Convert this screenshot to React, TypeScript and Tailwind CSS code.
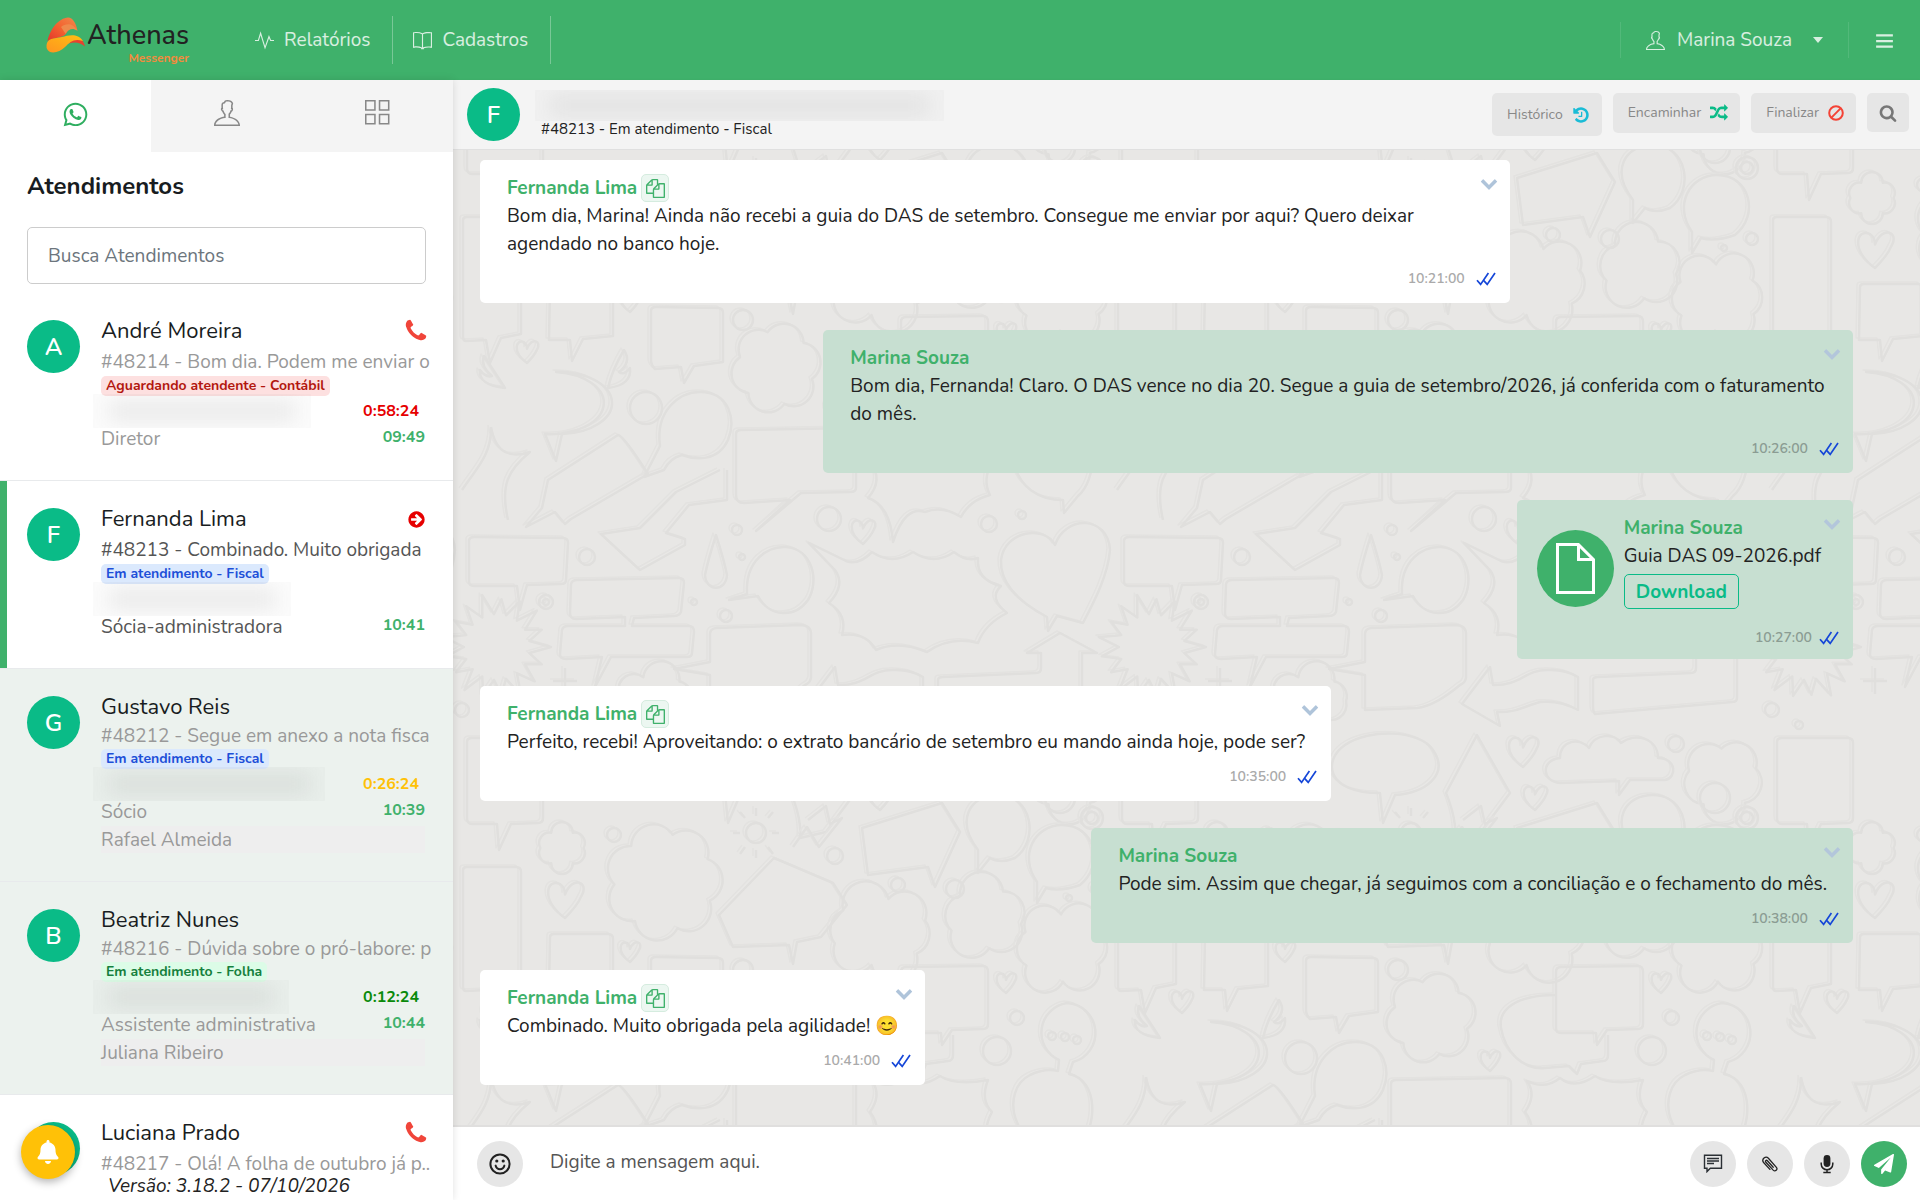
import React, { useState } from 'react';
import clsx from 'clsx';
import { FaBell, FaWhatsapp } from 'react-icons/fa';
import { TfiBook, TfiFile, TfiLayoutGrid2, TfiMenu, TfiPulse, TfiUser } from 'react-icons/tfi';

type Ticket = {
    id: number;
    name: string;
    preview: string;
    status?: string;
    badgeClass?: string;
    role?: string;
    time?: string;
    blurClass?: string;
    timer?: string;
    timerClass?: string;
    agent?: string;
    icon?: 'phone' | 'arrow';
};

type Message = {
    id: number;
    author: string;
    mine: boolean;
    time: string;
    text?: string;
    file?: string;
};

const tickets: Ticket[] = [
    {
        id: 48214,
        name: 'André Moreira',
        preview: 'Bom dia. Podem me enviar o',
        status: 'Aguardando atendente - Contábil',
        badgeClass: 'bg-[#fde0e0] text-[#b3170f]',
        role: 'Diretor',
        time: '09:49',
        blurClass: 'w-[218px]',
        timer: '0:58:24',
        timerClass: 'text-[#e60000]',
        icon: 'phone',
    },
    {
        id: 48213,
        name: 'Fernanda Lima',
        preview: 'Combinado. Muito obrigada',
        status: 'Em atendimento - Fiscal',
        badgeClass: 'bg-[#dbe9fd] text-[#1d4fd8]',
        role: 'Sócia-administradora',
        time: '10:41',
        blurClass: 'w-[198px]',
        icon: 'arrow',
    },
    {
        id: 48212,
        name: 'Gustavo Reis',
        preview: 'Segue em anexo a nota fisca',
        status: 'Em atendimento - Fiscal',
        badgeClass: 'bg-[#dbe9fd] text-[#1d4fd8]',
        role: 'Sócio',
        time: '10:39',
        blurClass: 'w-[232px]',
        timer: '0:26:24',
        timerClass: 'text-[#ffc107]',
        agent: 'Rafael Almeida',
    },
    {
        id: 48216,
        name: 'Beatriz Nunes',
        preview: 'Dúvida sobre o pró-labore: p',
        status: 'Em atendimento - Folha',
        badgeClass: 'bg-[#dcfce7] text-[#15803d]',
        role: 'Assistente administrativa',
        time: '10:44',
        blurClass: 'w-[196px]',
        timer: '0:12:24',
        timerClass: 'text-[#0a8a0a]',
        agent: 'Juliana Ribeiro',
    },
    {
        id: 48217,
        name: 'Luciana Prado',
        preview: 'Olá! A folha de outubro já p..',
        icon: 'phone',
    },
];

const messages: Message[] = [
    {
        id: 1,
        author: 'Fernanda Lima',
        mine: false,
        time: '10:21:00',
        text: 'Bom dia, Marina! Ainda não recebi a guia do DAS de setembro. Consegue me enviar por aqui? Quero deixar agendado no banco hoje.',
    },
    {
        id: 2,
        author: 'Marina Souza',
        mine: true,
        time: '10:26:00',
        text: 'Bom dia, Fernanda! Claro. O DAS vence no dia 20. Segue a guia de setembro/2026, já conferida com o faturamento do mês.',
    },
    { id: 3, author: 'Marina Souza', mine: true, time: '10:27:00', file: 'Guia DAS 09-2026.pdf' },
    {
        id: 4,
        author: 'Fernanda Lima',
        mine: false,
        time: '10:35:00',
        text: 'Perfeito, recebi! Aproveitando: o extrato bancário de setembro eu mando ainda hoje, pode ser?',
    },
    {
        id: 5,
        author: 'Marina Souza',
        mine: true,
        time: '10:38:00',
        text: 'Pode sim. Assim que chegar, já seguimos com a conciliação e o fechamento do mês.',
    },
    {
        id: 6,
        author: 'Fernanda Lima',
        mine: false,
        time: '10:41:00',
        text: 'Combinado. Muito obrigada pela agilidade! 😊',
    },
];

/* ---------- Icons ---------- */

const glyphs = {
    history:
        'M1664 896q0 156-61 298t-164 245-245 164-298 61q-172 0-327-72.5t-264-204.5q-7-10-6.5-22.5t8.5-20.5l137-138q10-9 25-9 16 2 23 12 73 95 179 147t225 52q104 0 198.5-40.5t163.5-109.5 109.5-163.5 40.5-198.5-40.5-198.5-109.5-163.5-163.5-109.5-198.5-40.5q-98 0-188 35.5t-160 101.5l137 138q31 30 14 69-17 40-59 40h-448q-26 0-45-19t-19-45v-448q0-42 40-59 39-17 69 14l130 129q107-101 244.5-156.5t284.5-55.5q156 0 298 61t245 164 164 245 61 298zm-640-288v448q0 14-9 23t-23 9h-320q-14 0-23-9t-9-23v-64q0-14 9-23t23-9h224v-352q0-14 9-23t23-9h64q14 0 23 9t9 23z',
    random:
        'M666 481q-60 92-137 273-22-45-37-72.5t-40.5-63.5-51-56.5-63-35-81.5-14.5h-224q-14 0-23-9t-9-23v-192q0-14 9-23t23-9h224q250 0 410 225zm1126 799q0 14-9 23l-320 320q-9 9-23 9-13 0-22.5-9.5t-9.5-22.5v-192q-32 0-85 .5t-81 1-73-1-71-5-64-10.5-63-18.5-58-28.5-59-40-55-53.5-56-69.5q59-93 136-273 22 45 37 72.5t40.5 63.5 51 56.5 63 35 81.5 14.5h256v-192q0-14 9-23t23-9q12 0 24 10l319 319q9 9 9 23zm0-896q0 14-9 23l-320 320q-9 9-23 9-13 0-22.5-9.5t-9.5-22.5v-192h-256q-48 0-87 15t-69 45-51 61.5-45 77.5q-32 62-78 171-29 66-49.5 111t-54 105-64 100-74 83-90 68.5-106.5 42-128 16.5h-224q-14 0-23-9t-9-23v-192q0-14 9-23t23-9h224q48 0 87-15t69-45 51-61.5 45-77.5q32-62 78-171 29-66 49.5-111t54-105 64-100 74-83 90-68.5 106.5-42 128-16.5h256v-192q0-14 9-23t23-9q12 0 24 10l319 319q9 9 9 23z',
    files:
        'M1696 384q40 0 68 28t28 68v1216q0 40-28 68t-68 28h-960q-40 0-68-28t-28-68v-288h-544q-40 0-68-28t-28-68v-672q0-40 20-88t48-76l408-408q28-28 76-48t88-20h416q40 0 68 28t28 68v328q68-40 128-40h416zm-544 213l-299 299h299v-299zm-640-384l-299 299h299v-299zm196 647l316-316v-416h-384v416q0 40-28 68t-68 28h-416v640h512v-256q0-40 20-88t48-76zm956 804v-1152h-384v416q0 40-28 68t-68 28h-416v640h896z',
    plane:
        'M1764 11q33 24 27 64l-256 1536q-5 29-32 45-14 8-31 8-11 0-24-5l-453-185-242 295q-18 23-49 23-13 0-22-4-19-7-30.5-23.5t-11.5-36.5v-349l864-1059-1069 925-395-162q-37-14-40-55-2-40 32-59l1664-960q15-9 32-9 20 0 36 11z',
    phone:
        'M1600 1240q0 27-10 70.5t-21 68.5q-21 50-122 106-94 51-186 51-27 0-53-3.5t-57.5-12.5-47-14.5-55.5-20.5-49-18q-98-35-175-83-127-79-264-216t-216-264q-48-77-83-175-3-9-18-49t-20.5-55.5-14.5-47-12.5-57.5-3.5-53q0-92 51-186 56-101 106-122 25-11 68.5-21t70.5-10q14 0 21 3 18 6 53 76 11 19 30 54t35 63.5 31 53.5q3 4 17.5 25t21.5 35.5 7 28.5q0 20-28.5 50t-62 55-62 53-28.5 46q0 9 5 22.5t8.5 20.5 14 24 11.5 19q76 137 174 235t235 174q2 1 19 11.5t24 14 20.5 8.5 22.5 5q18 0 46-28.5t53-62 55-62 50-28.5q14 0 28.5 7t35.5 21.5 25 17.5q25 15 53.5 31t63.5 35 54 30q70 35 76 53 3 7 3 21z',
    chevron:
        'M1683 808l-742 741q-19 19-45 19t-45-19l-742-741q-19-19-19-45.5t19-45.5l166-165q19-19 45-19t45 19l531 531 531-531q19-19 45-19t45 19l166 165q19 19 19 45.5t-19 45.5z',
    arrow:
        'M1413 896q0-27-18-45l-91-91-362-362q-18-18-45-18t-45 18l-91 91q-18 18-18 45t18 45l189 189h-502q-26 0-45 19t-19 45v128q0 26 19 45t45 19h502l-189 189q-19 19-19 45t19 45l91 91q18 18 45 18t45-18l362-362 91-91q18-18 18-45zm251 0q0 209-103 385.5t-279.5 279.5-385.5 103-385.5-103-279.5-279.5-103-385.5 103-385.5 279.5-279.5 385.5-103 385.5 103 279.5 279.5 103 385.5z',
    search:
        'M1216 832q0-185-131.5-316.5t-316.5-131.5-316.5 131.5-131.5 316.5 131.5 316.5 316.5 131.5 316.5-131.5 131.5-316.5zm512 832q0 52-38 90t-90 38q-54 0-90-38l-343-342q-179 124-399 124-143 0-273.5-55.5t-225-150-150-225-55.5-273.5 55.5-273.5 150-225 225-150 273.5-55.5 273.5 55.5 225 150 150 225 55.5 273.5q0 220-124 399l343 343q37 37 37 90z',
};

const Glyph: React.FC<{ name: keyof typeof glyphs; className?: string }> = ({ name, className }) => (
    <svg viewBox="0 0 1792 1792" fill="currentColor" className={className} aria-hidden="true">
        <path d={glyphs[name]} />
    </svg>
);

const BanIcon = () => (
    <svg viewBox="0 0 16 16" fill="none" stroke="currentColor" strokeWidth="2" className="size-4 text-[#f44336]" aria-hidden="true">
        <circle cx="8" cy="8" r="6.8" />
        <path d="M3.4 12.6 12.6 3.4" />
    </svg>
);

const TicksIcon = () => (
    <svg viewBox="0 0 20 14" fill="none" stroke="#1546d8" strokeWidth="1.7" className="h-[14px] w-5" aria-hidden="true">
        <path d="M1 8.2 4.6 12.4 12.4 1" />
        <path d="M7.8 8.6 11.2 12.4 19 1" />
    </svg>
);

const SmileIcon = () => (
    <svg viewBox="0 0 22 22" fill="none" stroke="#222" strokeWidth="2" className="size-[22px]" aria-hidden="true">
        <circle cx="11" cy="11" r="9.6" />
        <path d="M6.6 12.6c.6 2.3 2.3 3.7 4.4 3.7s3.8-1.4 4.4-3.7" strokeLinecap="round" />
        <circle cx="7.8" cy="8" r="1.6" fill="#222" stroke="none" />
        <circle cx="14.2" cy="8" r="1.6" fill="#222" stroke="none" />
    </svg>
);

const QuickReplyIcon = () => (
    <svg viewBox="0 0 20 19" fill="none" stroke="#2b3035" strokeWidth="1.4" className="h-[19px] w-5" aria-hidden="true">
        <path d="M1.5 1.2h17v13H7.3L4 17.6v-3.4H1.5z" />
        <path d="M4 4.5h12M4 7h12M4 9.5h7" />
    </svg>
);

const ClipIcon = () => (
    <svg viewBox="0 0 18 18" fill="none" stroke="#222" strokeWidth="1.3" strokeLinecap="round" className="size-[18px]" aria-hidden="true">
        <path d="M12.2 12.2 6.4 5.8C5.2 4.6 3.8 6 4.9 7.200l7.300 7.900c2 1.900 4.900-.6 3.200-2.800L7.400 3.200C4.600.4.100 4.300 2.600 7.500l6.300 6.900" />
    </svg>
);

const MicIcon = () => (
    <svg viewBox="0 0 14 20" className="h-5 w-[14px]" aria-hidden="true">
        <rect x="3.6" y="1" width="6.8" height="12" rx="3.4" fill="#222" />
        <path d="M1.2 8.5v1.5a5.8 5.8 0 0 0 11.6 0V8.5M7 15.8v2.4M3.3 18.4h7.4" fill="none" stroke="#222" strokeWidth="1.5" />
    </svg>
);

const Logo = () => (
    <svg viewBox="0 0 40 36" className="mt-[3px] h-9 w-10 shrink-0" aria-hidden="true">
        <defs>
            <linearGradient id="flame" x1="0" y1="1" x2="1" y2="0">
                <stop offset="0" stopColor="#e2372c" />
                <stop offset="0.5" stopColor="#f4622f" />
                <stop offset="1" stopColor="#ee8a4c" />
            </linearGradient>
            <linearGradient id="wave" x1="0" y1="1" x2="1" y2="0">
                <stop offset="0" stopColor="#ff9420" />
                <stop offset="1" stopColor="#ffc011" />
            </linearGradient>
        </defs>
        <path d="M1.5 24C4 12 13 1 22 .6c5 0 8 6 9.500 13.200-3-3-9-3.300-11 2.200C17 22 7 20 1.500 24z" fill="url(#flame)" />
        <path d="M15 10c5-4 12-4 16.500 3.800-4-3-9-2.600-12 3z" fill="#ee8a4c" />
        <path d="M24 21c7-4 13 0 15 8.500-5-4-10-5-16-3z" fill="#e8412f" />
        <path d="M.6 31C0 20 8 22 16 20c7-2 16-4 21 4-9-3-13 1-18 6-6 6-16 8-18.400 1z" fill="url(#wave)" />
    </svg>
);

/* ---------- Chat wallpaper ---------- */

// closed outline made of n round lobes
const cloudPath = (cx: number, cy: number, rx: number, ry: number, n: number, turn = 0) => {
    const pts = Array.from({ length: n }, (_, i) => {
        const a = turn + (i * 2 * Math.PI) / n;
        return [cx + rx * 0.8 * Math.cos(a), cy + ry * 0.8 * Math.sin(a)];
    });
    const r = ((rx + ry) / 2) * 0.85 * Math.sin(Math.PI / n);
    return pts.map((p, i) => (i ? `A${r} ${r} 0 0 1 ${p[0]} ${p[1]}` : `M${p[0]} ${p[1]}`)).join('') + `A${r} ${r} 0 0 1 ${pts[0][0]} ${pts[0][1]}Z`;
};

const burstPath = (cx: number, cy: number, inner: number, outer: number, n: number) =>
    Array.from({ length: n * 2 }, (_, i) => {
        const a = (i * Math.PI) / n;
        const r = i % 2 ? inner : outer - (i % 3) * 3;
        return `${i ? 'L' : 'M'}${cx + r * Math.cos(a)} ${cy + r * Math.sin(a)}`;
    }).join('') + 'Z';

const heartPath = (cx: number, cy: number, s: number) =>
    `M${cx} ${cy + s / 2}C${cx - s * 0.7} ${cy} ${cx - s * 0.5} ${cy - s * 0.6} ${cx - s * 0.15} ${cy - s * 0.45}Q${cx} ${cy - s * 0.35} ${cx} ${cy - s * 0.15}C${cx + s * 0.2} ${cy - s * 0.7} ${cx + s * 0.7} ${cy - s * 0.5} ${cx + s * 0.45} ${cy - s * 0.1}Q${cx + s * 0.35} ${cy + s * 0.15} ${cx} ${cy + s / 2}Z`;

const doodles = [
    // boxes with a tail
    'M463 220Q463 217 467 217H516Q521 217 521 222V334L501 338 490 363 486 340 466 341Q463 341 463 337Z',
    'M550 287Q550 284 554 284H608Q613 284 613 289V336L583 339 572 361 570 340 549 340Z',
    'M651 311Q651 307 656 307L718 308Q723 308 723 313V362L694 366 684 383 681 367 655 369Q651 365 651 360Z',
    'M736 434Q736 430 741 430L850 428Q856 428 856 434V488Q856 492 850 492L801 493 756 531 790 500 744 503Q736 503 736 495Z',
    'M901 322Q901 317 906 317L983 316Q988 316 988 322V374Q988 379 983 379L952 380 942 395 941 383 906 383Q901 383 901 378Z',
    'M901 345C860 345 843 360 846 378 850 402 868 420 890 418L914 416 922 424 926 414 948 411Q953 411 953 405V385',
    'M467 742Q467 738 472 738H538Q543 738 543 743V818Q543 823 538 823L511 824 499 850 497 824 472 824Q467 824 467 818Z',
    'M469 540Q470 537 474 537L563 538Q568 538 568 543L566 580Q566 584 561 584L527 585 520 610 517 586 474 586Q469 586 469 581Z',
    'M571 584Q572 580 577 580L679 578Q684 578 684 583L681 612Q679 616 674 616L634 618 632 626 689 626Q694 626 694 632L692 653Q692 657 687 657L611 657 595 687 602 657 566 659Q560 659 560 654L562 630Q563 626 568 626L625 626V617L576 619Q570 619 570 613Z',
    'M710 662V634Q710 629 716 628L800 625Q811 625 811 634V678Q810 683 805 685 780 706 762 708L710 710V675L674 669Z',
    'M938 680Q938 677 943 677L1036 673Q1041 673 1041 668V653H1027L1060 633 1097 653H1082V698Q1082 702 1077 702L940 714Q938 712 938 706Z',
    // balloons
    'M556 372A53 31 0 1 1 545 434L556 461 562 434A53 31 0 0 0 556 372Z',
    'M505 388Q478 385 480 370 486 378 492 376 480 366 484 356 500 380 505 388ZM608 388Q632 385 630 368 624 376 619 372 632 362 624 350 612 370 608 388Z',
    'M660 446C655 410 680 392 700 392 730 392 736 420 728 440 718 462 695 460 682 455Q670 458 664 470L644 477Q652 462 660 446Z',
    'M747 594C745 560 768 546 786 547 812 549 820 580 808 600 795 618 770 618 758 596L729 600Z',
    'M978 200C955 170 970 145 998 145 1032 145 1040 190 1015 208Q1000 214 990 208L978 223Z',
    'M1037 232C1018 205 1035 175 1062 175 1095 175 1105 215 1080 235Q1060 242 1046 238L1037 253Z',
    'M725 793C670 793 668 760 690 745 715 728 765 730 778 750 795 775 770 793 740 795L728 823Z',
    'M1067 353A30 30 0 0 1 1073 412L1069 424C1100 430 1097 480 1078 496L1064 513 1063 500C1010 500 1000 440 1030 425Q1045 418 1058 421L1059 410A30 30 0 0 1 1067 353Z',
    // leaf, slanted note, zigzag arrow
    'M491 427C492 455 475 470 462 490M491 427C496 455 512 458 530 452 508 470 500 485 508 520',
    'M548 480 618 435Q624 436 648 474L571 519 565 524 555 512 526 527 542 508Z',
    'M727 470V500L689 505 666 533 685 539V545L640 570 601 534 640 528 676 492 720 470',
    'M793 197 807 177 819 197 842 168 830 174 826 156 808 170',
    // torn cloud, starry cloud, large heart
    'M809 543 846 561Q858 566 872 552 892 566 913 552 934 566 954 552 966 562 978 558 976 580 1001 586 988 598 1007 613 985 624 978 643 950 636 927 652 898 640 876 650 866 632 842 635 848 615 829 603 846 585 835 570Z',
    'M872 431Q890 440 905 428 920 440 940 426 955 436 988 430 980 450 992 462 982 480 990 495 970 500 961 517 942 505 925 512 905 505 893 542 890 505 868 498 884 480 870 462 882 445 872 431Z',
    'M1048 631 1047 617C1015 600 1000 580 1001 560 1005 530 1045 525 1055 545 1065 515 1108 515 1110 550 1108 575 1095 600 1083 623L1057 616Z',
    // banner arrow, diamond, pentagon notes
    'M807 704 835 667 838 685C865 686 870 670 892 670Q910 669 923 677V710Q905 700 885 702C870 706 860 713 842 712L845 726Z',
    'M822 735 855 793 826 832 800 838Q802 820 791 793Z',
    'M862 178 942 153 960 182 935 237 928 217 868 225Z',
    'M774 208 833 233 847 255 821 287 797 292 793 314 789 295 733 297 719 265Z',
    'M716 535Q708 560 705 575C706 592 726 592 727 575Q724 560 716 535Z',
    'M905 783C887 782 885 760 905 758 905 740 925 737 934 748 940 733 960 733 966 743 980 732 1003 738 1003 758 1022 758 1022 778 1010 780L975 780 964 795V781Z',
    'M565 668V694M553 681H577',
    'M745 168 740 162M768 168 773 162M756 166V158M740 183H733M772 183H779M745 197 740 204M768 197 773 204M756 200V208',
    cloudPath(776, 368, 47, 46, 6, 0.3),
    cloudPath(562, 198, 27, 22, 6),
    cloudPath(664, 232, 62, 60, 7, 0.4),
    cloudPath(880, 282, 60, 42, 6, 0.7),
    cloudPath(985, 268, 46, 38, 5, 0.2),
    cloudPath(1062, 298, 52, 42, 6, 0.5),
    cloudPath(1068, 779, 44, 38, 5, 0.9),
    cloudPath(655, 697, 46, 26, 6, 0.2),
    burstPath(497, 647, 33, 54, 17),
    heartPath(527, 352, 22),
    heartPath(565, 250, 36),
    heartPath(863, 532, 24),
    heartPath(835, 411, 20),
    heartPath(1006, 333, 20),
    heartPath(630, 302, 20),
    heartPath(868, 752, 30),
    heartPath(880, 798, 24),
];

const dots: [number, number, number][] = [
    [743, 320, 10], [646, 408, 16], [587, 557, 8], [546, 602, 7], [546, 602, 3], [737, 530, 5], [742, 557, 3],
    [694, 602, 3], [726, 616, 6], [829, 519, 12], [989, 524, 8], [1022, 515, 4], [997, 401, 14], [1017, 368, 7],
    [1060, 148, 15], [1092, 168, 11], [1092, 168, 6], [898, 235, 7], [955, 239, 9], [1097, 239, 6], [1069, 248, 3],
    [756, 183, 10], [835, 206, 8], [614, 185, 7], [462, 710, 7], [489, 725, 4], [1021, 744, 8],
    [1052, 386, 4], [1065, 387, 4], [1077, 390, 4],
];

const Wallpaper = () => (
    <svg className="absolute inset-0 size-full" aria-hidden="true">
        <defs>
            <g id="doodle-lines" fill="none" strokeLinejoin="round">
                {doodles.map((d, i) => (
                    <path key={i} d={d} />
                ))}
                {dots.map(([cx, cy, r], i) => (
                    <circle key={i} cx={cx} cy={cy} r={r} />
                ))}
            </g>
            <g id="doodle-tile">
                <use href="#doodle-lines" stroke="#e3e2e0" strokeWidth="1.5" transform="translate(-3 -2)" />
                <use href="#doodle-lines" stroke="#e0dfdd" strokeWidth="2.5" />
            </g>
            <pattern id="doodle" width="655" height="650" patternUnits="userSpaceOnUse" patternTransform="translate(7 0)">
                {[-1115, -460, 195].map((x) =>
                    [-800, -150, 500].map((y) => <use key={`${x}${y}`} href="#doodle-tile" x={x} y={y} />)
                )}
            </pattern>
        </defs>
        <rect width="100%" height="100%" fill="url(#doodle)" />
    </svg>
);

/* ---------- Shared pieces ---------- */

const Avatar: React.FC<{ letter: string }> = ({ letter }) => (
    <div className="flex size-[53px] shrink-0 items-center justify-center rounded-full bg-[#0abb87] text-2xl font-semibold text-white">
        {letter}
    </div>
);

const Redacted: React.FC<{ className?: string }> = ({ className }) => (
    <div className={clsx('overflow-hidden bg-[#808080]/[0.03] px-4 py-2', className)}>
        <div className="size-full bg-[#808080]/15 blur-[10px]" />
    </div>
);

/* ---------- Header ---------- */

const TopBar = () => (
    <header className="flex h-20 shrink-0 items-center justify-between bg-[#3fb16b] text-[19px] text-white/80">
        <div className="flex items-center">
            <a href="#inicio" aria-label="Athenas Messenger" className="mr-[66px] ml-[46px] flex items-start gap-px">
                <Logo />
                <span className="flex flex-col items-end pt-2">
                    <span className="text-[27px] leading-7 font-medium text-[#222]">Athenas</span>
                    <span className="text-xs leading-4 font-bold text-[#f58a3c]">Messenger</span>
                </span>
            </a>
            <nav className="flex items-center">
                <a href="#relatorios" className="flex h-12 items-center gap-[10px] border-r border-white/30 pr-[22px]">
                    <TfiPulse className="size-[19px]" />
                    Relatórios
                </a>
                <a href="#cadastros" className="flex h-12 items-center gap-[10px] border-r border-white/30 pr-[22px] pl-5">
                    <TfiBook className="size-[19px]" />
                    Cadastros
                </a>
            </nav>
        </div>
        <div className="flex items-center">
            <button type="button" className="flex h-9 items-center border-x border-white/10 px-[25px]">
                <TfiUser className="mr-3 size-[19px]" />
                Marina Souza
                <span className="ml-[21px] border-x-[5px] border-t-[6px] border-x-transparent border-t-white/80" />
            </button>
            <button type="button" aria-label="Menu" className="px-[26px]">
                <TfiMenu className="size-[19px]" />
            </button>
        </div>
    </header>
);

/* ---------- Sidebar ---------- */

const TicketItem: React.FC<{ ticket: Ticket; active: boolean; onSelect: () => void }> = ({ ticket, active, onSelect }) => (
    <li>
        <button
            type="button"
            onClick={onSelect}
            className={clsx(
                'relative flex w-full gap-[21px] border-b border-[#e8eaec] pt-6 pr-7 pl-[27px] text-left',
                ticket.agent ? 'bg-[#ecf2ee] pb-7' : 'bg-white pb-[27px]'
            )}
        >
            {active && <span className="absolute inset-y-0 left-0 w-[7px] bg-[#3fb16b]" />}
            <div className="pt-[3px]">
                <Avatar letter={ticket.name[0]} />
            </div>
            <div className={clsx('min-w-0 flex-1 text-[19px]', active ? 'text-[#555]' : 'text-[#999]')}>
                <div className="flex h-7 items-center justify-between text-[22px] text-[#181c21]">
                    {ticket.name}
                    {ticket.icon === 'phone' && <Glyph name="phone" className="-mr-1 size-[26px] text-[#f0453a]" />}
                    {ticket.icon === 'arrow' && <Glyph name="arrow" className="-mr-px size-[19px] text-[#e60000]" />}
                </div>
                <div
                    className={clsx(
                        '-mr-3 overflow-hidden leading-[30px] whitespace-nowrap',
                        ticket.agent ? 'h-7' : 'mt-[2px] h-[29px]'
                    )}
                >
                    #{ticket.id} - {ticket.preview}
                </div>
                {ticket.status && (
                    <>
                        <div className="flex h-5">
                            <span className={clsx('rounded-[5px] px-[5px] text-sm font-bold', ticket.badgeClass)}>{ticket.status}</span>
                        </div>
                        <div className="flex h-[30px] items-center justify-between">
                            <Redacted className={clsx('-ml-2 h-[34px]', ticket.blurClass)} />
                            <span className={clsx('pr-[6px] text-base font-bold', ticket.timerClass)}>{ticket.timer}</span>
                        </div>
                        <div className="flex h-[27px] items-start justify-between leading-[27px]">
                            {ticket.role}
                            <span className="text-base leading-[22px] font-bold text-[#3fb16b]">{ticket.time}</span>
                        </div>
                    </>
                )}
                {ticket.agent && <div className="h-[27px] bg-[#eee] leading-7">{ticket.agent}</div>}
            </div>
        </button>
    </li>
);

const Sidebar = () => {
    const [selected, setSelected] = useState(48213);

    return (
        <aside className="relative z-10 flex w-[453px] shrink-0 flex-col bg-white shadow-[0_0_8px_rgba(0,0,0,0.12)]">
            <div className="grid h-18 shrink-0 grid-cols-3 bg-[#f4f4f4] text-[#888]">
                <button type="button" aria-label="Atendimentos" className="flex items-center justify-center bg-white pb-1">
                    <FaWhatsapp className="size-[27px] text-[#2fae60]" />
                </button>
                <button type="button" aria-label="Contatos" className="flex items-center justify-center pb-[6px]">
                    <TfiUser className="size-[26px]" />
                </button>
                <button type="button" aria-label="Departamentos" className="flex items-center justify-center pb-[6px]">
                    <TfiLayoutGrid2 className="size-[26px]" />
                </button>
            </div>
            <div className="shrink-0 px-[27px] pb-[9px]">
                <h1 className="pt-[14px] pb-5 text-2xl leading-[41px] font-bold text-[#181c21]">Atendimentos</h1>
                <input
                    type="text"
                    aria-label="Busca Atendimentos"
                    placeholder="Busca Atendimentos"
                    className="h-[57px] w-full rounded-[5px] border border-[#ccc] px-5 text-[19px] placeholder:text-[#6c757d]"
                />
            </div>
            <ul className="min-h-0 flex-1 overflow-hidden">
                {tickets.map((t) => (
                    <TicketItem key={t.id} ticket={t} active={t.id === selected} onSelect={() => setSelected(t.id)} />
                ))}
            </ul>
            <footer className="h-6 shrink-0 bg-white pl-[108px] text-[19px] leading-5 text-[#222] italic">
                Versão: 3.18.2 - 07/10/2026
            </footer>
            <button
                type="button"
                aria-label="Notificações"
                className="absolute bottom-[21px] left-[21px] flex size-[54px] items-center justify-center rounded-full bg-[#ffc107] text-white shadow-[0_3px_8px_rgba(0,0,0,0.3)]"
            >
                <FaBell className="size-6" />
            </button>
        </aside>
    );
};

/* ---------- Chat ---------- */

const actionClass = 'flex items-center gap-[9px] rounded-[5px] bg-[#e6e6e6] pr-3 pl-[15px] text-sm text-[#888]';

const ChatHeader = () => (
    <div className="relative flex h-[70px] shrink-0 items-start justify-between border-b border-[#e0e0e0] bg-[#f4f4f4] pr-[11px] pl-[14px] shadow-sm">
        <div className="flex gap-[15px] pt-2">
            <Avatar letter="F" />
            <div className="pt-[2px]">
                <Redacted className="h-[31px] w-[409px]" />
                <p className="pl-[6px] text-[15px] leading-4 text-[#222]">#48213 - Em atendimento - Fiscal</p>
            </div>
        </div>
        <div className="flex items-start gap-[11px] pt-[13px]">
            <button type="button" className={clsx(actionClass, 'h-[43px]')}>
                Histórico
                <Glyph name="history" className="size-[18px] text-[#1abcd6]" />
            </button>
            <button type="button" className={clsx(actionClass, 'h-10')}>
                Encaminhar
                <Glyph name="random" className="size-[18px] text-[#0abb87]" />
            </button>
            <button type="button" className={clsx(actionClass, 'h-10')}>
                Finalizar
                <BanIcon />
            </button>
            <button type="button" aria-label="Pesquisar" className="flex h-[39px] items-center rounded-[5px] bg-[#e6e6e6] px-3 text-[#777]">
                <Glyph name="search" className="size-[18px]" />
            </button>
        </div>
    </div>
);

const MessageBubble: React.FC<{ message: Message }> = ({ message }) => (
    <article
        className={clsx(
            'relative max-w-[75%] rounded-[5px] pt-[14px] text-[19px] leading-7',
            message.mine ? 'self-end bg-[#c7dfd1]' : 'self-start bg-white',
            message.file ? 'pl-5' : 'pl-[27px]'
        )}
    >
        <button type="button" aria-label="Opções" className="absolute top-[14px] right-3">
            <Glyph name="chevron" className={clsx('size-[18px]', message.mine ? 'text-[#b3c6db]' : 'text-[#afc4da]')} />
        </button>
        <div className={clsx('flex gap-[10px]', message.file ? 'pr-8' : 'pr-[26px]')}>
            {message.file && (
                <div className="mt-4 flex size-[77px] shrink-0 items-center justify-center rounded-full bg-[#3fb16b] text-white">
                    <TfiFile className="size-[51px]" />
                </div>
            )}
            <div>
                <div className="flex h-7 items-center gap-1 font-bold text-[#3fb16b]">
                    {message.author}
                    {!message.mine && (
                        <button
                            type="button"
                            aria-label="Copiar"
                            className="flex size-7 items-center justify-center rounded-[5px] border border-[#d5ecdf] bg-[#ecf7f1]"
                        >
                            <Glyph name="files" className="size-[19px]" />
                        </button>
                    )}
                </div>
                {message.text && <p className="text-[#222]">{message.text}</p>}
                {message.file && (
                    <>
                        <p className="text-[#222]">{message.file}</p>
                        <button
                            type="button"
                            className="mt-1 flex h-[35px] items-center rounded-[5px] border border-[#0abb87] px-[11px] font-bold text-[#0abb87]"
                        >
                            Download
                        </button>
                    </>
                )}
            </div>
        </div>
        <div
            className={clsx(
                'flex items-center justify-end pr-[14px] text-sm font-semibold',
                message.file ? 'h-[50px] gap-[7px] pt-2' : 'h-[45px] gap-[11px] pb-1',
                message.mine ? 'text-[#8b9c93]' : 'text-[#aaa]'
            )}
        >
            {message.time}
            <TicksIcon />
        </div>
    </article>
);

const roundClass = 'flex size-[46px] shrink-0 items-center justify-center rounded-full';

const Composer = () => {
    const [draft, setDraft] = useState('');

    return (
        <form
            onSubmit={(e) => e.preventDefault()}
            className="flex h-[75px] shrink-0 items-center gap-[11px] border-t-2 border-[#e0dfde] bg-white pr-[13px] pl-6"
        >
            <button type="button" aria-label="Emojis" className={clsx(roundClass, 'bg-[#e6e6e6]')}>
                <SmileIcon />
            </button>
            <input
                type="text"
                aria-label="Mensagem"
                placeholder="Digite a mensagem aqui."
                value={draft}
                onChange={(e) => setDraft(e.target.value)}
                className="h-10 min-w-0 flex-1 px-4 pb-[3px] text-[19px] outline-none placeholder:text-[#555]"
            />
            <button type="button" aria-label="Respostas rápidas" className={clsx(roundClass, 'bg-[#e6e6e6]')}>
                <QuickReplyIcon />
            </button>
            <button type="button" aria-label="Anexar" className={clsx(roundClass, 'bg-[#e6e6e6]')}>
                <ClipIcon />
            </button>
            <button type="button" aria-label="Gravar áudio" className={clsx(roundClass, 'bg-[#e6e6e6]')}>
                <MicIcon />
            </button>
            <button type="submit" aria-label="Enviar" className={clsx(roundClass, 'bg-[#3fb16b] text-white')}>
                <Glyph name="plane" className="size-5" />
            </button>
        </form>
    );
};

export default function App() {
    return (
        <div className="flex h-screen flex-col bg-white font-['Nunito','Open_Sans',sans-serif]">
            <TopBar />
            <div className="flex min-h-0 flex-1">
                <Sidebar />
                <main className="flex min-w-0 flex-1 flex-col">
                    <ChatHeader />
                    <section className="relative min-h-0 flex-1 overflow-hidden bg-[#e8e7e5]">
                        <Wallpaper />
                        <div className="relative flex flex-col gap-[27px] pt-[10px] pr-[67px] pl-[27px]">
                            {messages.map((m) => (
                                <MessageBubble key={m.id} message={m} />
                            ))}
                        </div>
                    </section>
                    <Composer />
                </main>
            </div>
        </div>
    );
}
